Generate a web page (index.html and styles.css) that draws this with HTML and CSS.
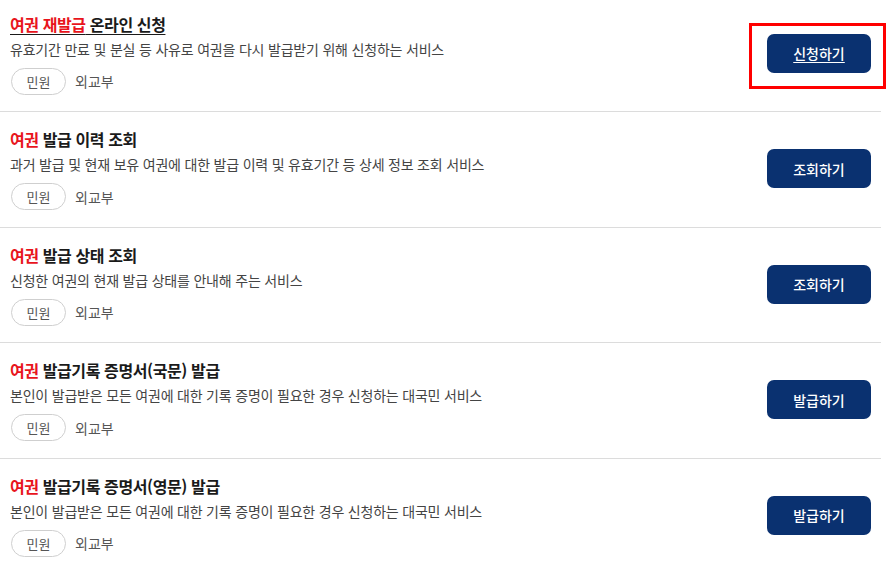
FILE: index.html
```html
<!DOCTYPE html>
<html lang="ko">
<head>
<meta charset="utf-8">
<link rel="stylesheet" href="styles.css">
</head>
<body>
<ul class="list">
  <li class="item first">
    <div class="info">
      <a class="title active"><span class="hl">여권 재발급</span> 온라인 신청</a>
      <p class="desc">유효기간 만료 및 분실 등 사유로 여권을 다시 발급받기 위해 신청하는 서비스</p>
      <div class="meta"><span class="tag">민원</span><span class="org">외교부</span></div>
    </div>
    <div class="action focus"><a class="btn active">신청하기</a></div>
  </li>
  <li class="item">
    <div class="info">
      <a class="title"><span class="hl">여권</span> 발급 이력 조회</a>
      <p class="desc">과거 발급 및 현재 보유 여권에 대한 발급 이력 및 유효기간 등 상세 정보 조회 서비스</p>
      <div class="meta"><span class="tag">민원</span><span class="org">외교부</span></div>
    </div>
    <div class="action"><a class="btn">조회하기</a></div>
  </li>
  <li class="item">
    <div class="info">
      <a class="title"><span class="hl">여권</span> 발급 상태 조회</a>
      <p class="desc">신청한 여권의 현재 발급 상태를 안내해 주는 서비스</p>
      <div class="meta"><span class="tag">민원</span><span class="org">외교부</span></div>
    </div>
    <div class="action"><a class="btn">조회하기</a></div>
  </li>
  <li class="item">
    <div class="info">
      <a class="title"><span class="hl">여권</span> 발급기록 증명서(국문) 발급</a>
      <p class="desc">본인이 발급받은 모든 여권에 대한 기록 증명이 필요한 경우 신청하는 대국민 서비스</p>
      <div class="meta"><span class="tag">민원</span><span class="org">외교부</span></div>
    </div>
    <div class="action"><a class="btn">발급하기</a></div>
  </li>
  <li class="item">
    <div class="info">
      <a class="title"><span class="hl">여권</span> 발급기록 증명서(영문) 발급</a>
      <p class="desc">본인이 발급받은 모든 여권에 대한 기록 증명이 필요한 경우 신청하는 대국민 서비스</p>
      <div class="meta"><span class="tag">민원</span><span class="org">외교부</span></div>
    </div>
    <div class="action"><a class="btn">발급하기</a></div>
  </li>
</ul>
</body>
</html>
```

FILE: styles.css
```css
html, body {
  margin: 0;
  padding: 0;
  background: #fff;
}
body {
  font-family: "Noto Sans CJK KR", "Noto Sans", sans-serif;
  color: #222;
  overflow: hidden;
}
.list {
  list-style: none;
  margin: 0;
  padding: 0;
  width: 881px;
}
.item {
  display: flex;
  align-items: center;
  justify-content: space-between;
  padding: 15px 10px 16.5px 10px;
  border-bottom: 1px solid #dcdcdc;
}
.item.first {
  padding-top: 11.5px;
}
.info {
  display: flex;
  flex-direction: column;
}
.title {
  font-size: 16px;
  line-height: 24px;
  font-weight: 700;
  color: #1a1a1a;
  text-decoration: none;
  letter-spacing: -0.4px;
}
.title.active {
  text-decoration: underline;
  text-underline-offset: 3px;
  text-decoration-thickness: 1px;
}
.hl {
  color: #e8141c;
}
.desc {
  margin: 3px 0 0 0;
  font-size: 14px;
  line-height: 20px;
  color: #444;
  letter-spacing: -0.2px;
}
.meta {
  display: flex;
  align-items: center;
  margin-top: 9px;
  gap: 9px;
}
.tag {
  display: inline-flex;
  align-items: center;
  justify-content: center;
  box-sizing: border-box;
  width: 55px;
  height: 27px;
  border: 1px solid #cfcfcf;
  border-radius: 14px;
  font-size: 13px;
  color: #555;
  margin-left: 1px;
}
.org {
  font-size: 14px;
  color: #555;
}
.action {
  position: relative;
  display: flex;
}
.action.focus::after {
  content: "";
  position: absolute;
  top: -11px;
  bottom: -16px;
  left: -18px;
  right: -15px;
  border: 3px solid #ff0000;
  pointer-events: none;
}
.btn {
  display: flex;
  align-items: center;
  justify-content: center;
  width: 104px;
  height: 39px;
  border-radius: 7px;
  background: #0a3170;
  color: #fff;
  font-size: 14px;
  font-weight: 500;
  text-decoration: none;
}
.btn.active {
  text-decoration: underline;
  text-underline-offset: 3px;
}
```
